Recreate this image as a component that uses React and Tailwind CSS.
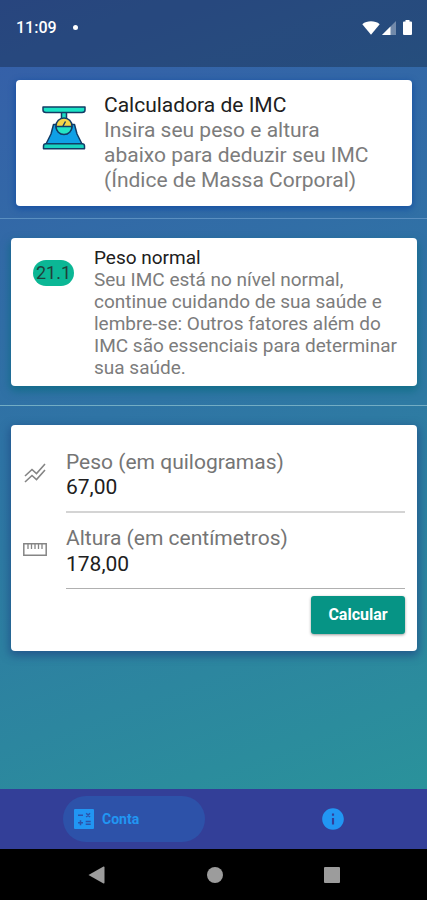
import { MdInfo } from "react-icons/md";

function StatusBar() {
  return (
    <header className="flex h-[67px] shrink-0 items-center justify-between bg-black/25 pr-[15px] pb-3 pl-4 text-white">
      <div className="flex items-center gap-4">
        <span className="text-base font-medium">11:09</span>
        <span className="size-[5px] rounded-full bg-white" />
      </div>
      <div className="flex items-center gap-[2px]">
        <svg width="18" height="14" viewBox="0 0 18 14" aria-hidden="true">
          <path d="M0.3 3.2C5 -0.6 13 -0.6 17.7 3.2L9 13.8Z" fill="#fff" />
        </svg>
        <svg width="14" height="14" viewBox="0 0 14 14" aria-hidden="true">
          <path d="M14 0V14H0Z" fill="#fff" fillOpacity="0.35" />
          <path d="M8.5 5.5V14H0Z" fill="#fff" />
        </svg>
        <svg className="ml-[5px]" width="9" height="15" viewBox="0 0 9 15" aria-hidden="true">
          <path d="M1 1.5H2.5V0H6.5V1.5H8Q9 1.5 9 2.5V14Q9 15 8 15H1Q0 15 0 14V2.5Q0 1.5 1 1.5Z" fill="#fff" />
        </svg>
      </div>
    </header>
  );
}

function ScaleIcon() {
  return (
    <svg className="mt-[26px] shrink-0" width="44" height="44" viewBox="0 0 44 44" aria-hidden="true">
      <g stroke="#123c66" strokeWidth="1.5" strokeLinejoin="round">
        <path d="M19.5 6H24.5V14H19.5Z" fill="#1bdcc4" />
        <path d="M1 1H43V4Q43 6.5 40 6.5H4Q1 6.5 1 4Z" fill="#1be4c6" />
        <path d="M11.5 18.5H32.5L35 28L40 38H4L9 28Z" fill="#0fa0e6" />
        <path d="M1.5 42.8V40Q1.5 37.8 4 37.8H40Q42.5 37.8 42.5 40V42.8Z" fill="#17d3c0" />
        <circle cx="22" cy="20" r="8" fill="#f5d547" />
        <path d="M14 20.5H30A8 8 0 0 1 14 20.5Z" fill="#25e5c4" />
        <path d="M21 20L23.5 15.5" />
      </g>
    </svg>
  );
}

function TrendIcon() {
  return (
    <svg width="26" height="26" viewBox="0 0 26 26" fill="none" stroke="currentColor" strokeWidth="1.6" aria-hidden="true">
      <path d="M3 16L10 9.5L14.5 13.5L23 4" />
      <path d="M3 22L10 15.5L14.5 19.5L23 10" />
    </svg>
  );
}

function RulerIcon() {
  return (
    <svg width="26" height="26" viewBox="0 0 26 26" fill="none" stroke="currentColor" strokeWidth="1.5" aria-hidden="true">
      <path d="M1.8 7.8H24.2V19.2H1.8Z" />
      <path d="M6 8V13M9.5 8V13M13 8V13M16.5 8V13M20 8V13" strokeWidth="1.3" />
    </svg>
  );
}

function CalculatorIcon() {
  return (
    <svg width="20" height="20" viewBox="0 0 20 20" aria-hidden="true">
      <path d="M1 0H19Q20 0 20 1V19Q20 20 19 20H1Q0 20 0 19V1Q0 0 1 0Z" fill="currentColor" />
      <path d="M4 6.2H9M12.2 4.2L16 8M16 4.2L12.2 8M4 13.7H9M6.5 11.2V16.2M11.7 12.4H16.7M11.7 15.2H16.7" stroke="#2d52a9" strokeWidth="1.5" />
    </svg>
  );
}

function Field({ id, label, value, icon, lineClass }) {
  return (
    <div className="flex h-[76px] items-start gap-[18px]">
      <span className="mt-3 shrink-0 text-[#858585]">{icon}</span>
      <div className="flex min-w-0 flex-1 flex-col">
        <label htmlFor={id} className="mt-[2px] text-[21px] leading-[25px] text-[#757575]">{label}</label>
        <input
          id={id}
          type="text"
          inputMode="decimal"
          defaultValue={value}
          className={`h-[38px] w-full bg-transparent pb-3 text-[21px] leading-[25px] text-[#202020] outline-none ${lineClass}`}
        />
      </div>
    </div>
  );
}

export default function App() {
  return (
    <div className="flex min-h-screen flex-col bg-black font-[Roboto,sans-serif]">
      <div className="flex flex-1 flex-col bg-linear-[160deg,#365da9_0%,#2f74a5_48%,#2a929b_100%]">
        <StatusBar />

        <main className="flex flex-1 flex-col">
          <section className="mt-[13px] mr-[15px] ml-4 flex gap-[18px] rounded bg-white pr-8 pb-[13px] pl-[26px] shadow-[0_2px_6px_1px_rgba(13,71,161,0.7)]">
            <ScaleIcon />
            <div className="pt-[13px] text-[21px] leading-[25px]">
              <h1 className="text-[#202020]">Calculadora de IMC</h1>
              <p className="text-[#7c7c7c]">Insira seu peso e altura abaixo para deduzir seu IMC (Índice de Massa Corporal)</p>
            </div>
          </section>

          <hr className="mt-3 border-[#5a8fc0]" />

          <section className="mt-[19px] mr-[10px] ml-[11px] flex gap-5 rounded bg-white pr-4 pb-[7px] pl-[22px] shadow-[0_4px_8px_1px_rgba(0,105,120,0.6)]">
            <span className="mt-[22px] flex h-[26px] w-[41px] shrink-0 items-center justify-center rounded-full bg-[#0bb795] text-lg text-[#20403a]">21.1</span>
            <div className="pt-[9px] text-[19px] leading-[22px]">
              <h2 className="text-[#202020]">Peso normal</h2>
              <p className="text-[#7c7c7c]">Seu IMC está no nível normal, continue cuidando de sua saúde e lembre-se: Outros fatores além do IMC são essenciais para determinar sua saúde.</p>
            </div>
          </section>

          <hr className="mt-[19px] border-[#73adc4]" />

          <form
            className="mt-[19px] mr-[10px] ml-[11px] flex flex-col rounded bg-white pt-[23px] pr-3 pb-[17px] pl-[11px] shadow-[0_3px_9px_2px_rgba(32,78,135,0.75)]"
            onSubmit={(event) => event.preventDefault()}
          >
            <Field id="peso" label="Peso (em quilogramas)" value="67,00" icon={<TrendIcon />} lineClass="border-b-2 border-[#d4d4d4]" />
            <Field id="altura" label="Altura (em centímetros)" value="178,00" icon={<RulerIcon />} lineClass="border-b border-[#b0b0b0]" />
            <button type="submit" className="mt-[-4px] h-[38px] w-[94px] self-end rounded-[3px] bg-[#069485] text-base font-bold text-white shadow-[0_1px_3px_rgba(0,0,0,0.4)]">
              Calcular
            </button>
          </form>
        </main>
      </div>

      <nav className="flex h-[60px] shrink-0 items-center justify-between bg-[#333f98] px-[63px] text-[#2196f3]">
        <button type="button" className="flex h-[46px] w-[142px] items-center gap-2 rounded-full bg-[#2d52a9] pl-[11px] text-sm font-bold">
          <CalculatorIcon />
          Conta
        </button>
        <button type="button" aria-label="Info" className="flex h-[46px] w-[62px] items-center justify-center">
          <MdInfo size={26} />
        </button>
      </nav>

      <footer className="flex h-[51px] shrink-0 items-center justify-center bg-black">
        <button type="button" aria-label="Voltar">
          <svg width="18" height="18" viewBox="0 0 18 18" aria-hidden="true">
            <path d="M0.5 9L15.5 0.5Q16.5 0.3 16.5 1.5V16.5Q16.5 17.7 15.5 17.5Z" fill="#9c9c9c" />
          </svg>
        </button>
        <button type="button" aria-label="Início" className="mx-[101px] size-4 rounded-full bg-[#9c9c9c]" />
        <button type="button" aria-label="Recentes" className="size-4 rounded-[1px] bg-[#9c9c9c]" />
      </footer>
    </div>
  );
}
